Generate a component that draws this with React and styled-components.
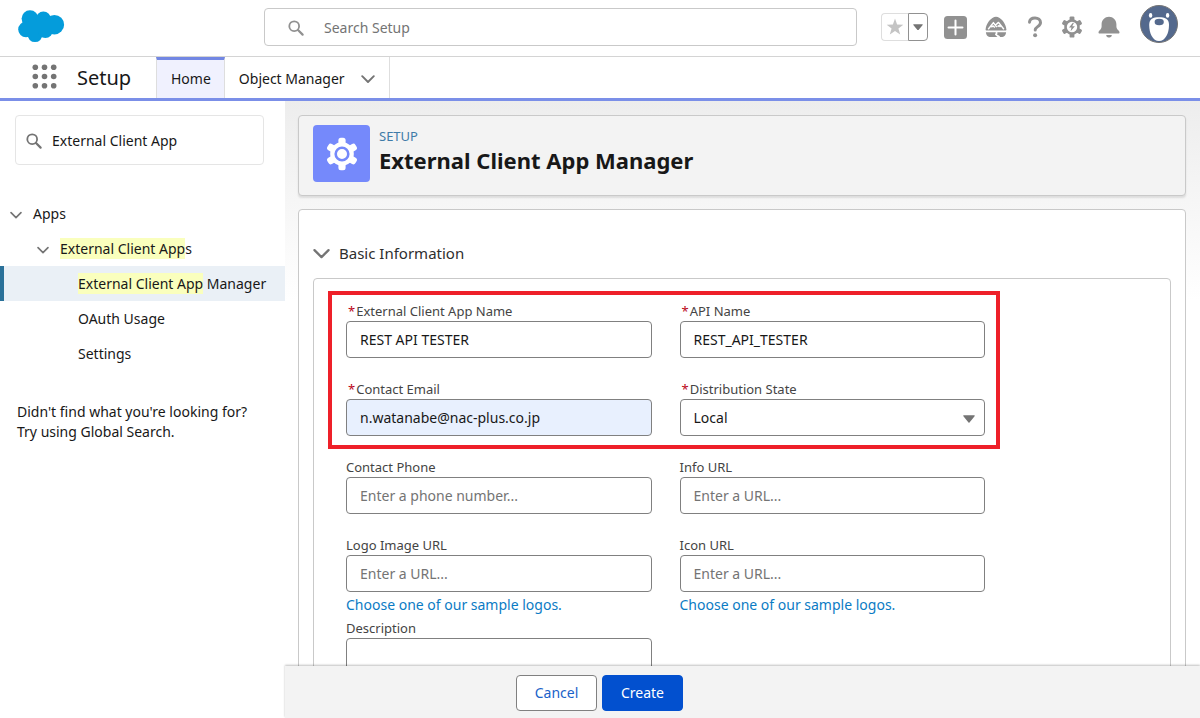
import React, { useState } from "react";
import styled, { createGlobalStyle, css } from "styled-components";

const GlobalStyle = createGlobalStyle`
  * {
    box-sizing: border-box;
  }

  body {
    margin: 0;
    background: #fff;
    color: #181818;
    font-family: "Noto Sans", "Open Sans", sans-serif;
    font-size: 14px;
    line-height: 20px;
  }

  button, input, select, textarea {
    font: inherit;
    color: inherit;
  }

  a {
    color: inherit;
    text-decoration: none;
  }
`;

const Page = styled.div`
  display: flex;
  flex-direction: column;
  height: 100vh;
`;

const Header = styled.header`
  display: flex;
  align-items: flex-start;
  flex: none;
  height: 57px;
  padding-right: 22px;
  border-bottom: 1px solid #d4d4d4;
`;

const LogoLink = styled.a`
  flex: 0 0 264px;
  padding: 9px 0 0 17px;

  svg {
    display: block;
  }
`;

const GlobalSearch = styled.label`
  display: flex;
  align-items: center;
  gap: 20px;
  flex: 0 1 593px;
  height: 38px;
  margin-top: 8px;
  padding: 2px 23px 0;
  border: 1px solid #c9c9c9;
  border-radius: 4px;
  color: #919191;
`;

const PlainInput = styled.input`
  flex: 1;
  min-width: 0;
  padding: 0;
  border: none;
  outline: none;
  background: transparent;
  color: #181818;

  &::placeholder {
    color: #747474;
    opacity: 1;
  }
`;

const HeaderActions = styled.div`
  display: flex;
  align-items: center;
  gap: 15px;
  height: 44px;
  margin: 5px 0 0 auto;
`;

const IconButton = styled.button`
  display: flex;
  align-items: center;
  justify-content: center;
  width: ${(props) => props.$width || 22}px;
  height: 28px;
  padding: 0;
  border: none;
  background: transparent;
  color: #919191;
  cursor: pointer;

  svg {
    flex: none;
  }
`;

const FavoriteGroup = styled.div`
  display: flex;
  height: 28px;
`;

const FavoriteButton = styled(IconButton)`
  width: 27px;
  border: 1px solid #dedede;
  border-right: none;
  border-radius: 4px 0 0 4px;
  color: #c4c4c4;
`;

const FavoriteMenuButton = styled(IconButton)`
  width: 20px;
  border: 1px solid #919191;
  border-radius: 0 4px 4px 0;
  color: #747474;
`;

const AvatarButton = styled(IconButton)`
  align-self: flex-start;
  width: 38px;
  height: 38px;
  margin-left: 5px;
  border-radius: 50%;
`;

const NavBar = styled.nav`
  display: flex;
  align-items: stretch;
  flex: none;
  height: 44px;
  border-bottom: 3px solid #7b8fe8;
`;

const AppLauncher = styled.button`
  display: flex;
  align-items: center;
  padding: 0 0 2px 32px;
  border: none;
  background: transparent;
  color: #747474;
  cursor: pointer;
`;

const AppName = styled.span`
  width: 99px;
  padding: 7px 0 0 20px;
  font-size: 20px;
  line-height: 28px;
`;

const Tab = styled.a`
  display: flex;
  align-items: center;
  gap: 16px;
  padding: 2px 14px 0;
  border-right: 1px solid #dedede;

  ${(props) =>
    props.$active &&
    css`
      padding: 0 13px 1px 14px;
      border-top: 3px solid #7287e3;
      border-left: 1px solid #dedede;
      background: #f0f1fe;
    `}

  svg {
    color: #747474;
  }
`;

const Body = styled.div`
  display: flex;
  flex: 1;
  min-height: 0;
`;

const Sidebar = styled.aside`
  flex: 0 0 285px;
  padding-top: 14px;
  background: #fff;
`;

const QuickFind = styled.label`
  display: flex;
  align-items: center;
  gap: 10px;
  height: 50px;
  margin: 0 21px 31px 15px;
  padding: 2px 10px 0;
  border: 1px solid #e5e5e5;
  border-radius: 4px;
  color: #747474;
`;

const Tree = styled.ul`
  margin: 0;
  padding: 0;
  list-style: none;
`;

const INDENTS = { 1: 10, 2: 37, 3: 78 };

const TreeItem = styled.li`
  display: flex;
  align-items: center;
  gap: 11px;
  height: 35px;
  padding-left: ${(props) => INDENTS[props.$level]}px;
  white-space: nowrap;

  ${(props) =>
    props.$selected &&
    css`
      background: #eaf0f6;
      box-shadow: inset 4px 0 0 #2a7199;
    `}

  svg {
    flex: none;
    margin-top: 3px;
    color: #747474;
  }
`;

const Mark = styled.mark`
  padding: 1px 0;
  background: #faffbd;
  color: inherit;
`;

const SidebarHint = styled.p`
  margin: 31px 17px 0;
`;

const Main = styled.main`
  display: flex;
  flex-direction: column;
  flex: 1;
  min-width: 0;
  background: linear-gradient(#ededed, #fff 200px);
`;

const ScrollArea = styled.div`
  flex: 1;
  min-height: 0;
  padding: 14px 14px 0 13px;
  overflow-y: auto;
  scrollbar-width: none;
`;

const PageHeader = styled.div`
  display: flex;
  gap: 9px;
  height: 81px;
  margin-bottom: 13px;
  padding: 9px 14px;
  border: 1px solid #c9c9c9;
  border-radius: 4px;
  background: #f3f3f3;
  box-shadow: 0 2px 2px rgba(0, 0, 0, 0.1);
`;

const PageIcon = styled.div`
  display: flex;
  align-items: center;
  justify-content: center;
  width: 57px;
  height: 57px;
  border-radius: 4px;
  background: #7589fb;
  color: #fff;
`;

const Eyebrow = styled.div`
  padding-top: 1px;
  color: #3f7ba8;
  font-size: 13px;
`;

const PageTitle = styled.h1`
  margin: 0;
  font-size: 22px;
  font-weight: 700;
  line-height: 28px;
`;

const Card = styled.section`
  padding: 28px 14px 14px;
  border: 1px solid #c9c9c9;
  border-radius: 4px;
  background: #fff;
`;

const SectionToggle = styled.button`
  display: flex;
  align-items: center;
  gap: 9px;
  height: 30px;
  margin-bottom: 10px;
  padding: 0;
  border: none;
  background: transparent;
  color: #2e2e2e;
  font-size: 15px;
  cursor: pointer;

  svg {
    color: #747474;
  }
`;

const SectionBody = styled.div`
  padding: 12px 14px;
  border: 1px solid #c9c9c9;
  border-radius: 4px;
`;

const FieldGrid = styled.div`
  display: grid;
  grid-template-columns: 1fr 1fr;
  column-gap: 28px;
  row-gap: 21px;
  max-width: 672px;
  padding: 8px 15px 0 18px;
`;

const HighlightedGrid = styled(FieldGrid)`
  padding: 6px 11px 9px 14px;
  border: 4px solid #ee2029;
`;

const Field = styled.div`
  display: flex;
  flex-direction: column;
  min-width: 0;
`;

const Label = styled.label`
  height: 20px;
  color: #444;
  font-size: 13px;
`;

const Required = styled.abbr`
  margin: 0 1px 0 2px;
  color: #ba0517;
  text-decoration: none;
`;

const controlStyle = css`
  width: 100%;
  height: 37px;
  padding: 0 13px;
  border: 1px solid #808080;
  border-radius: 4px;
  background: #fff;
  outline: none;
`;

const TextInput = styled.input`
  ${controlStyle}
  ${(props) => props.$autofilled && "background: #e8f0fe;"}

  &::placeholder {
    color: #747474;
    opacity: 1;
  }
`;

const TextArea = styled.textarea`
  ${controlStyle}
  height: 80px;
  resize: none;
`;

const SelectWrap = styled.div`
  position: relative;

  svg {
    position: absolute;
    top: 16px;
    right: 10px;
    color: #747474;
    pointer-events: none;
  }
`;

const Select = styled.select`
  ${controlStyle}
  appearance: none;
`;

const HelpLink = styled.a`
  margin-top: 3px;
  color: #0b7bc4;
`;

const LastRow = styled(FieldGrid)`
  padding-top: 3px;
`;

const Footer = styled.footer`
  display: flex;
  justify-content: center;
  gap: 5px;
  z-index: 1;
  height: 52px;
  padding: 9px 286px 0 0;
  background: #f3f3f3;
  box-shadow: 0 -1px 2px rgba(0, 0, 0, 0.25);
`;

const Button = styled.button`
  width: 81px;
  height: 36px;
  padding: 0;
  border: 1px solid ${(props) => (props.$primary ? "#0250cf" : "#808080")};
  border-radius: 4px;
  background: ${(props) => (props.$primary ? "#0250cf" : "#fff")};
  color: ${(props) => (props.$primary ? "#fff" : "#1a62c9")};
  cursor: pointer;
`;

const CloudLogo = () => (
  <svg width="48" height="34" viewBox="17 9 48 34" fill="#049cdb">
    <circle cx="30" cy="18.6" r="8.4" />
    <circle cx="43.4" cy="19" r="7.5" />
    <circle cx="54.4" cy="24.7" r="9.7" />
    <circle cx="26" cy="29.4" r="7.8" />
    <circle cx="35" cy="34.6" r="7.5" />
    <circle cx="45.4" cy="30.4" r="7.6" />
    <path d="M24 22h30v10H24z" />
  </svg>
);

const SearchIcon = () => (
  <svg
    width="16"
    height="16"
    viewBox="0 0 16 16"
    fill="none"
    stroke="currentColor"
  >
    <circle cx="6.2" cy="6.2" r="4.9" strokeWidth="1.8" />
    <path d="M10 10l4.600 4.600" strokeWidth="2.2" strokeLinecap="round" />
  </svg>
);

const Chevron = ({ size = 14 }) => (
  <svg
    width={size}
    height={size}
    viewBox="0 0 14 14"
    fill="none"
    stroke="currentColor"
    strokeWidth="1.9"
    strokeLinecap="round"
    strokeLinejoin="round"
  >
    <path d="M1.2 4.2L7 10l5.8-5.8" />
  </svg>
);

const Caret = ({ width = 12 }) => (
  <svg width={width} height={(width * 2) / 3} viewBox="0 0 12 8">
    <path d="M.8.3h10.4c.5 0 .7.5.4.9L6.5 7.4c-.3.4-.7.4-1 0L.4 1.2C.1.8.3.3.8.3z" fill="currentColor" />
  </svg>
);

const StarIcon = () => (
  <svg width="18" height="18" viewBox="0 0 18 18" fill="currentColor">
    <path d="M9 .6l2.1 5.9 6.2.2-4.9 3.8 1.8 6L9 12.9l-5.2 3.6 1.8-6L.7 6.7l6.2-.2z" />
  </svg>
);

const PlusIcon = () => (
  <svg width="23" height="23" viewBox="0 0 23 23">
    <rect width="23" height="23" rx="3.5" fill="currentColor" />
    <path d="M11.5 4.5v14M4.5 11.5h14" stroke="#fff" strokeWidth="2" strokeLinecap="round" />
  </svg>
);

const TrailheadIcon = () => (
  <svg width="22" height="22" viewBox="0 0 22 22">
    <path
      d="M11 .8c1.2 0 2.3.5 3.6 1.3 3.5 2.2 6.2 6.5 6.8 11.3.1.7-.3 1.2-1 1.2H1.6c-.7 0-1.1-.5-1-1.2C1.2 8.6 3.9 4.3 7.4 2.1 8.7 1.3 9.8.8 11 .8z"
      fill="currentColor"
    />
    <path
      d="M3.2 13.2L8.400 6.600l3.400 4.600M10.200 9.200l3.300-2.800 5.400 6.800M6.300 11.200l1.900-1.300 1.700 1.600M12.600 10.600l1.400-1 1.600 1.400"
      fill="none"
      stroke="#fff"
      strokeWidth="1.400"
      strokeLinejoin="round"
    />
    <path
      d="M.9 16.300h9c1 0 1.300.7.6 1.300-.8.7-.6 1.400.3 1.900l1.700 1.500H4.600C2.500 21 1 18.800.9 16.300zM12 16.300h9.100c-.1 2.500-1.600 4.700-3.700 4.700h-2.200c-.5-1.200-1.800-1.700-2.700-2.200-.6-.3-.6-.7-.2-1.100.4-.5.4-1-.3-1.400z"
      fill="currentColor"
    />
  </svg>
);

const HelpIcon = () => (
  <svg width="16" height="22" viewBox="0 0 16 22" fill="none">
    <path
      d="M2.500 6.200C2.700 3.300 5 2 8 2c3.200 0 5.500 1.700 5.500 4.500 0 4.200-5.300 4-5.300 7.500"
      stroke="currentColor"
      strokeWidth="3"
      strokeLinecap="round"
    />
    <circle cx="8.100" cy="19.300" r="2" fill="currentColor" />
  </svg>
);

const TEETH = [0, 60, 120, 180, 240, 300];

const SetupIcon = () => (
  <svg width="22" height="22" viewBox="0 0 22 22" fill="currentColor">
    <circle cx="11" cy="11" r="7.800" />
    {TEETH.map((angle) => (
      <rect
        key={angle}
        x="8.600"
        y=".4"
        width="4.800"
        height="6"
        rx="1.200"
        transform={`rotate(${angle} 11 11)`}
      />
    ))}
    <circle cx="11" cy="11" r="5.200" fill="#fff" />
    <path d="M11.900 6.800L8 11.500h2.500l-.9 3.800 4.300-5h-2.700l1.700-3.200z" />
  </svg>
);

const BellIcon = () => (
  <svg width="22" height="22" viewBox="0 0 22 22" fill="currentColor">
    <path d="M20.300 14.300c-1.200-1-1.900-2.300-1.900-3.800V8.200C18.400 4 15 .7 11 .7S3.600 4 3.600 8.200v2.300c0 1.500-.7 2.800-1.900 3.800-.8.600-1.200 1.300-1.200 2.100 0 .6.400 1 1.100 1h18.800c.7 0 1.100-.4 1.100-1 0-.8-.4-1.500-1.200-2.100zM13.300 19H8.700c-.4 0-.6.3-.5.700.4 1.100 1.500 1.900 2.800 1.900s2.400-.8 2.800-1.900c.1-.4-.1-.7-.5-.7z" />
  </svg>
);

const AvatarIcon = () => (
  <svg width="38" height="38" viewBox="0 0 38 38">
    <circle cx="19" cy="19" r="18.500" fill="#54698d" stroke="#747474" />
    <ellipse cx="10.600" cy="10.400" rx="1.700" ry="2.400" fill="#fff" />
    <ellipse cx="27.600" cy="10.400" rx="1.700" ry="2.400" fill="#fff" />
    <path
      d="M19 12.200c5.800 0 10 1.200 10 7.800 0 8.200-3.600 16-10 16S9.200 28.200 9.200 20c0-6.600 4-7.800 9.800-7.800z"
      fill="#fff"
    />
    <ellipse cx="19.200" cy="17" rx="4.600" ry="3.200" fill="#54698d" />
  </svg>
);

const LauncherIcon = () => (
  <svg width="25" height="25" viewBox="0 0 25 25" fill="currentColor">
    {[3.3, 12.5, 21.7].map((cy) =>
      [3.3, 12.5, 21.7].map((cx) => (
        <circle key={`${cx}-${cy}`} cx={cx} cy={cy} r="2.800" />
      ))
    )}
  </svg>
);

const GearIcon = () => (
  <svg width="34" height="34" viewBox="0 0 34 34" fill="currentColor">
    <circle cx="17" cy="17" r="11.800" />
    {TEETH.map((angle) => (
      <rect
        key={angle}
        x="13.400"
        y=".8"
        width="7.200"
        height="9"
        rx="2.500"
        transform={`rotate(${angle} 17 17)`}
      />
    ))}
    <circle cx="17" cy="17" r="6.300" fill="none" stroke="#7589fb" strokeWidth="2.600" />
  </svg>
);

const FormField = ({ id, label, required, link, children }) => (
  <Field>
    <Label htmlFor={id}>
      {required && <Required title="required">*</Required>}
      {label}
    </Label>
    {children}
    {link && <HelpLink href="#logos">{link}</HelpLink>}
  </Field>
);

const SetupHeader = () => (
  <Header>
    <LogoLink href="#home" aria-label="Salesforce">
      <CloudLogo />
    </LogoLink>
    <GlobalSearch>
      <SearchIcon />
      <PlainInput type="text" aria-label="Search Setup" placeholder="Search Setup" />
    </GlobalSearch>
    <HeaderActions>
      <FavoriteGroup>
        <FavoriteButton aria-label="Favorite">
          <StarIcon />
        </FavoriteButton>
        <FavoriteMenuButton aria-label="Favorites list">
          <Caret width={10} />
        </FavoriteMenuButton>
      </FavoriteGroup>
      <IconButton $width={25} aria-label="Global actions">
        <PlusIcon />
      </IconButton>
      <IconButton $width={26} aria-label="Guidance center">
        <TrailheadIcon />
      </IconButton>
      <IconButton aria-label="Help">
        <HelpIcon />
      </IconButton>
      <IconButton aria-label="Setup menu">
        <SetupIcon />
      </IconButton>
      <IconButton aria-label="Notifications">
        <BellIcon />
      </IconButton>
      <AvatarButton aria-label="View profile">
        <AvatarIcon />
      </AvatarButton>
    </HeaderActions>
  </Header>
);

const SetupSidebar = () => {
  const [query, setQuery] = useState("External Client App");

  return (
    <Sidebar>
      <QuickFind>
        <SearchIcon />
        <PlainInput
          type="text"
          aria-label="Quick Find"
          value={query}
          onChange={(e) => setQuery(e.target.value)}
        />
      </QuickFind>
      <Tree>
        <TreeItem $level={1}>
          <Chevron size={12} />
          <a href="#apps">Apps</a>
        </TreeItem>
        <TreeItem $level={2}>
          <Chevron size={12} />
          <a href="#external-client-apps">
            <Mark>External Client App</Mark>s
          </a>
        </TreeItem>
        <TreeItem $level={3} $selected>
          <a href="#manager">
            <Mark>External Client App</Mark> Manager
          </a>
        </TreeItem>
        <TreeItem $level={3}>
          <a href="#oauth-usage">OAuth Usage</a>
        </TreeItem>
        <TreeItem $level={3}>
          <a href="#settings">Settings</a>
        </TreeItem>
      </Tree>
      <SidebarHint>
        Didn't find what you're looking for?
        <br />
        Try using Global Search.
      </SidebarHint>
    </Sidebar>
  );
};

const App = () => {
  const [form, setForm] = useState({
    appName: "REST API TESTER",
    apiName: "REST_API_TESTER",
    email: "n.watanabe@nac-plus.co.jp",
    state: "Local",
    phone: "",
    infoUrl: "",
    logoUrl: "",
    iconUrl: "",
    description: "",
  });

  const bind = (name) => ({
    id: name,
    value: form[name],
    onChange: (e) => setForm({ ...form, [name]: e.target.value }),
  });

  return (
    <Page>
      <GlobalStyle />
      <SetupHeader />
      <NavBar>
        <AppLauncher aria-label="App Launcher">
          <LauncherIcon />
        </AppLauncher>
        <AppName>Setup</AppName>
        <Tab href="#home" $active>
          Home
        </Tab>
        <Tab href="#object-manager">
          Object Manager
          <Chevron />
        </Tab>
      </NavBar>

      <Body>
        <SetupSidebar />
        <Main>
          <ScrollArea>
            <PageHeader>
              <PageIcon>
                <GearIcon />
              </PageIcon>
              <div>
                <Eyebrow>SETUP</Eyebrow>
                <PageTitle>External Client App Manager</PageTitle>
              </div>
            </PageHeader>

            <Card>
              <SectionToggle>
                <Chevron size={17} />
                Basic Information
              </SectionToggle>
              <SectionBody>
                <HighlightedGrid>
                  <FormField id="appName" label="External Client App Name" required>
                    <TextInput type="text" {...bind("appName")} />
                  </FormField>
                  <FormField id="apiName" label="API Name" required>
                    <TextInput type="text" {...bind("apiName")} />
                  </FormField>
                  <FormField id="email" label="Contact Email" required>
                    <TextInput type="email" $autofilled {...bind("email")} />
                  </FormField>
                  <FormField id="state" label="Distribution State" required>
                    <SelectWrap>
                      <Select {...bind("state")}>
                        <option>Local</option>
                        <option>Packaged</option>
                      </Select>
                      <Caret />
                    </SelectWrap>
                  </FormField>
                </HighlightedGrid>

                <FieldGrid>
                  <FormField id="phone" label="Contact Phone">
                    <TextInput type="tel" placeholder="Enter a phone number..." {...bind("phone")} />
                  </FormField>
                  <FormField id="infoUrl" label="Info URL">
                    <TextInput type="url" placeholder="Enter a URL..." {...bind("infoUrl")} />
                  </FormField>
                  <FormField id="logoUrl" label="Logo Image URL" link="Choose one of our sample logos.">
                    <TextInput type="url" placeholder="Enter a URL..." {...bind("logoUrl")} />
                  </FormField>
                  <FormField id="iconUrl" label="Icon URL" link="Choose one of our sample logos.">
                    <TextInput type="url" placeholder="Enter a URL..." {...bind("iconUrl")} />
                  </FormField>
                </FieldGrid>

                <LastRow>
                  <FormField id="description" label="Description">
                    <TextArea {...bind("description")} />
                  </FormField>
                </LastRow>
              </SectionBody>
            </Card>
          </ScrollArea>

          <Footer>
            <Button type="button">Cancel</Button>
            <Button type="button" $primary>
              Create
            </Button>
          </Footer>
        </Main>
      </Body>
    </Page>
  );
};

export default App;
